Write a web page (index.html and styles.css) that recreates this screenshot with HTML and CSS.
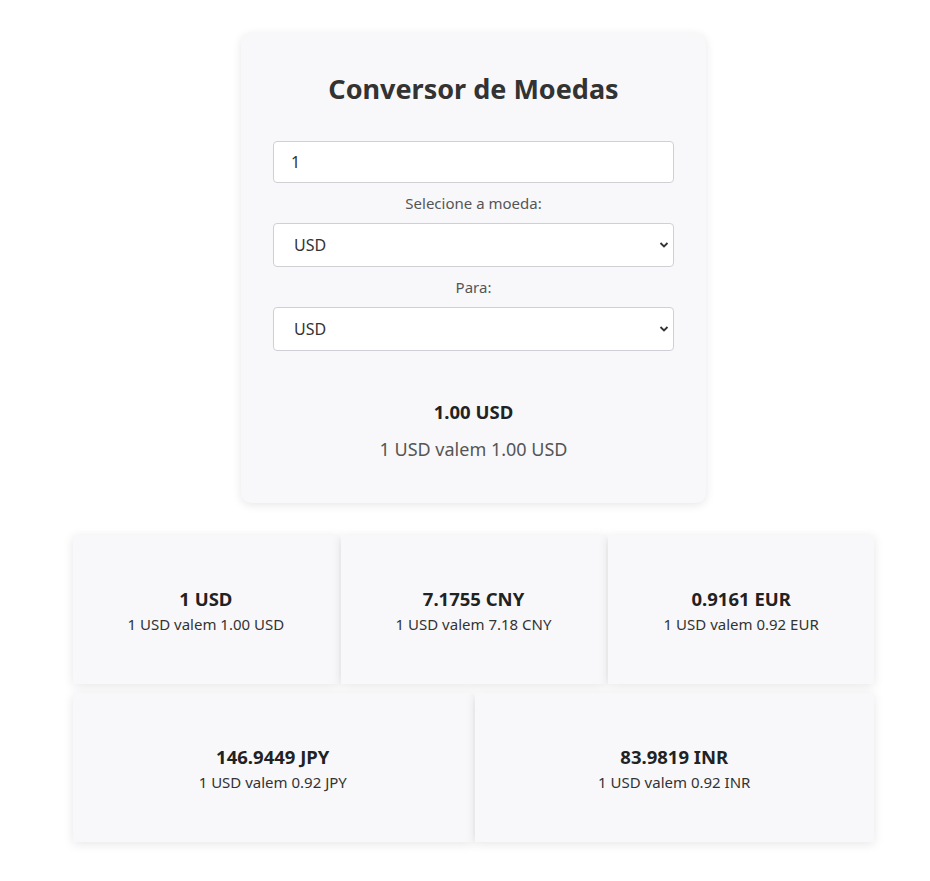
FILE: index.html
```html
<!DOCTYPE html>
<html lang="pt">
<head>
    <meta charset="UTF-8">
    <meta name="viewport" content="width=device-width, initial-scale=1.0">
    <title>Conversor de Moedas</title>
    <link rel="stylesheet" href="styles.css">
</head>
<body>
    <div class="page">
        <div class="converter">
            <h1>Conversor de Moedas</h1>

            <input type="number" id="amount" class="field" value="1">

            <label for="from">Selecione a moeda:</label>
            <div class="select-wrap">
                <select id="from" class="field">
                    <option>USD</option>
                    <option>CNY</option>
                    <option>EUR</option>
                    <option>JPY</option>
                    <option>INR</option>
                </select>
                <svg class="chevron" width="10" height="8" viewBox="0 0 10 8"><path d="M1.5 2 L5 5.5 L8.5 2" fill="none" stroke="#333" stroke-width="1.8"/></svg>
            </div>

            <label for="to">Para:</label>
            <div class="select-wrap">
                <select id="to" class="field">
                    <option>USD</option>
                    <option>CNY</option>
                    <option>EUR</option>
                    <option>JPY</option>
                    <option>INR</option>
                </select>
                <svg class="chevron" width="10" height="8" viewBox="0 0 10 8"><path d="M1.5 2 L5 5.5 L8.5 2" fill="none" stroke="#333" stroke-width="1.8"/></svg>
            </div>

            <div class="result">
                <p class="result-value">1.00 USD</p>
                <p class="result-text">1 USD valem 1.00 USD</p>
            </div>
        </div>

        <div class="rates">
            <div class="rate">
                <p class="rate-value">1 USD</p>
                <p class="rate-text">1 USD valem 1.00 USD</p>
            </div>
            <div class="rate">
                <p class="rate-value">7.1755 CNY</p>
                <p class="rate-text">1 USD valem 7.18 CNY</p>
            </div>
            <div class="rate">
                <p class="rate-value">0.9161 EUR</p>
                <p class="rate-text">1 USD valem 0.92 EUR</p>
            </div>
            <div class="rate">
                <p class="rate-value">146.9449 JPY</p>
                <p class="rate-text">1 USD valem 0.92 JPY</p>
            </div>
            <div class="rate">
                <p class="rate-value">83.9819 INR</p>
                <p class="rate-text">1 USD valem 0.92 INR</p>
            </div>
        </div>
    </div>
</body>
</html>
```

FILE: styles.css
```css
/* base */
body {
    margin: 0;
    padding: 0 0 0 17px;
    background: #ffffff;
    font-family: "Noto Sans", "Open Sans", Arial, sans-serif;
    color: #333333;
}

.page {
    display: flex;
    flex-direction: column;
    align-items: center;
    padding: 33px 0 30px;
}

/* caixa principal */
.converter {
    box-sizing: border-box;
    width: 465px;
    padding: 32px 32px 41px;
    background-color: #f8f8fa;
    border-radius: 10px;
    box-shadow: 0 2px 10px rgba(0, 0, 0, 0.1);
    display: flex;
    flex-direction: column;
    align-items: stretch;
}

.converter h1 {
    margin: 4px 0 32px;
    text-align: center;
    font-size: 27px;
    font-weight: 700;
    color: #333333;
    line-height: 40px;
}

.field {
    box-sizing: border-box;
    width: 100%;
    border: 1px solid #cfcfd6;
    border-radius: 4px;
    background: #ffffff;
    font-family: inherit;
    font-size: 16px;
    color: #333333;
    outline: none;
}

input.field {
    height: 42px;
    padding: 0 17px;
}

select.field {
    height: 44px;
    padding: 0 20px;
    appearance: none;
    -webkit-appearance: none;
}

.select-wrap {
    position: relative;
}

.chevron {
    position: absolute;
    right: 5px;
    top: 18px;
}

label {
    display: block;
    text-align: center;
    font-size: 15px;
    color: #555555;
    margin: 10px 0 10px;
    line-height: 20px;
}

.result {
    margin-top: 48px;
    text-align: center;
}

.result-value {
    margin: 0;
    font-size: 18.5px;
    font-weight: 700;
    color: #222222;
    line-height: 26px;
}

.result-text {
    margin: 11px 0 0;
    font-size: 18px;
    color: #555555;
    line-height: 26px;
}

/* cards de cotacoes */
.rates {
    display: flex;
    flex-wrap: wrap;
    gap: 9px 2px;
    width: 801px;
    margin-top: 32px;
}

.rate {
    flex: 1 1 260px;
    box-sizing: border-box;
    height: 149px;
    background-color: #f8f8fa;
    box-shadow: 0 2px 10px rgba(0, 0, 0, 0.1);
    display: flex;
    flex-direction: column;
    justify-content: center;
    align-items: center;
}

.rate-value {
    margin: 0;
    font-size: 18.5px;
    font-weight: 700;
    color: #222222;
    line-height: 26px;
}

.rate-text {
    margin: 2px 0 0;
    font-size: 15px;
    color: #333333;
    line-height: 20px;
}
```
